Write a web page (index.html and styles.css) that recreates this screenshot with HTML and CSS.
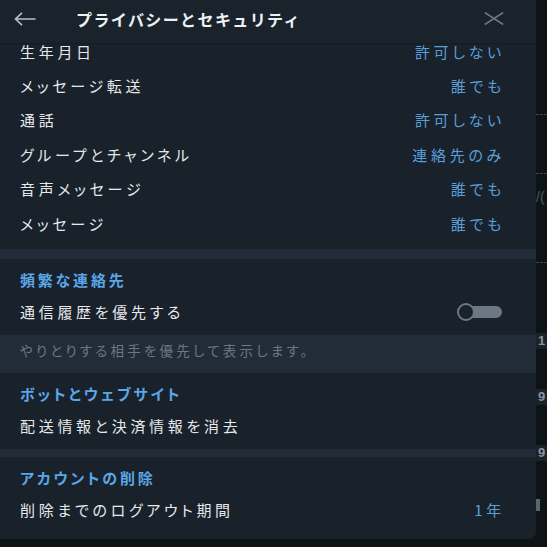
FILE: index.html
```html
<!DOCTYPE html>
<html lang="ja">
  <head>
    <meta charset="UTF-8" />
    <meta name="viewport" content="width=device-width, initial-scale=1.0" />
    <title>プライバシーとセキュリティ</title>
    <link rel="stylesheet" href="styles.css">
  </head>
  <body>
    <div class="screen">
      <section class="panel">
        <header class="panelHeader">
          <button type="button" class="iconButton backButton" aria-label="戻る">
            <svg width="22" height="14" viewBox="0 0 22 14">
              <path d="M21.5 7H1.5M8 0.8L1.5 7L8 13.2" fill="none" stroke="#b9c0c7" stroke-width="1.6" />
            </svg>
          </button>
          <h1 class="panelTitle">プライバシーとセキュリティ</h1>
          <button type="button" class="iconButton closeButton" aria-label="閉じる">
            <svg width="20" height="13" viewBox="0 0 20 13">
              <path d="M0.8 0.6L19.2 12.4M19.2 0.6L0.8 12.4" fill="none" stroke="#6b7681" stroke-width="1.8" />
            </svg>
          </button>
        </header>

        <div class="panelScroll">
          <div class="settingsGroup firstGroup">
            <div class="settingRow scrolledRow"><span class="rowLabel">生年月日</span><span class="rowValue">許可しない</span></div>
            <div class="settingRow"><span class="rowLabel">メッセージ転送</span><span class="rowValue">誰でも</span></div>
            <div class="settingRow"><span class="rowLabel">通話</span><span class="rowValue">許可しない</span></div>
            <div class="settingRow"><span class="rowLabel">グループとチャンネル</span><span class="rowValue">連絡先のみ</span></div>
            <div class="settingRow"><span class="rowLabel">音声メッセージ</span><span class="rowValue">誰でも</span></div>
            <div class="settingRow"><span class="rowLabel">メッセージ</span><span class="rowValue">誰でも</span></div>
          </div>

          <div class="divider wideDivider"></div>

          <div class="settingsGroup">
            <div class="groupTitle">頻繁な連絡先</div>
            <div class="settingRow">
              <span class="rowLabel">通信履歴を優先する</span>
              <span class="toggle"><span class="toggleKnob"></span><span class="toggleTrack"></span></span>
            </div>
          </div>
          <div class="groupNote">やりとりする相手を優先して表示します。</div>

          <div class="settingsGroup">
            <div class="groupTitle">ボットとウェブサイト</div>
            <div class="settingRow"><span class="rowLabel">配送情報と決済情報を消去</span></div>
          </div>

          <div class="divider"></div>

          <div class="settingsGroup lastGroup">
            <div class="groupTitle">アカウントの削除</div>
            <div class="settingRow"><span class="rowLabel">削除までのログアウト期間</span><span class="rowValue">1年</span></div>
          </div>
        </div>
      </section>

      <aside class="backdropStrip">
        <span class="stripDots firstDots"></span>
        <span class="stripDots"></span>
        <span class="stripText slashText">/(</span>
        <span class="stripDots"></span>
        <span class="stripBadge badgeOne">1</span>
        <span class="stripBadge">9</span>
        <span class="stripBadge">9</span>
        <span class="stripBar"></span>
      </aside>
    </div>
  </body>
</html>
```

FILE: styles.css
```css
html {
  box-sizing: border-box;
  font-family: "Noto Sans CJK JP", "Noto Sans", sans-serif;
}

*,
*:before,
*:after {
  box-sizing: inherit;
}

body {
  margin: 0;
  padding: 0;
  background-color: #0e1318;
  color: #e4e8ec;
}

.screen {
  width: 547px;
  height: 547px;
  display: flex;
  flex-direction: row;
  overflow: hidden;
}

.panel {
  width: 536px;
  height: 539px;
  flex-shrink: 0;
  display: flex;
  flex-direction: column;
  background-color: #19212b;
  border-bottom-right-radius: 7px;
  overflow: hidden;
}

/* header */

.panelHeader {
  height: 44px;
  flex-shrink: 0;
  display: flex;
  align-items: center;
  padding: 0 32px 0 14px;
  background-color: #1a222c;
  border-bottom: 1px solid #141b23;
}

.iconButton {
  border: none;
  padding: 0;
  background: none;
  display: flex;
  align-items: center;
}

.iconButton svg {
  display: block;
}

.backButton {
  margin-top: -5px;
}

.panelTitle {
  margin: -6px 0 0 40px;
  font-size: 16px;
  font-weight: 700;
  letter-spacing: 1.4px;
  color: #eef1f4;
  flex: 1;
}

.closeButton {
  margin-top: -6px;
}

/* scroll area */

.panelScroll {
  flex: 1;
}

.settingsGroup {
  padding: 7px 0 3px;
}

.firstGroup {
  padding: 0 0 8px;
}

.lastGroup {
  padding-bottom: 6px;
}

.settingRow {
  height: 34.5px;
  display: flex;
  align-items: center;
  justify-content: space-between;
  padding: 0 31px 0 20px;
  font-size: 15px;
  line-height: 16px;
  letter-spacing: 3.7px;
  font-feature-settings: "palt";
}

/* the list is scrolled: only the lower part of the first row shows */
.scrolledRow {
  height: 24.5px;
  align-items: flex-start;
}

.settingsGroup:not(.firstGroup) .settingRow {
  height: 40px;
}

.rowLabel {
  color: #e6e9ec;
}

.rowValue {
  color: #5b9fd9;
}

.groupTitle {
  height: 26px;
  display: flex;
  align-items: center;
  padding-left: 20px;
  font-size: 15px;
  font-weight: 700;
  letter-spacing: 2.8px;
  font-feature-settings: "palt";
  color: #5aa6e6;
}

.divider {
  height: 8px;
  background-color: #222c38;
}

.wideDivider {
  height: 10px;
}

.groupNote {
  height: 38px;
  padding: 5px 20px 0;
  background-color: #222c38;
  font-size: 13.5px;
  letter-spacing: 3.2px;
  font-feature-settings: "palt";
  color: #6b7783;
}

/* toggle */

.toggle {
  display: flex;
  align-items: center;
  margin-right: 3px;
}

.toggleKnob {
  width: 18px;
  height: 18px;
  border: 2px solid #6c7883;
  border-radius: 50%;
  background-color: #19212b;
  position: relative;
  z-index: 1;
}

.toggleTrack {
  width: 34px;
  height: 12px;
  margin-left: -7px;
  border-radius: 6px;
  background-color: #6c7883;
}

/* background behind the panel */

.backdropStrip {
  flex: 1;
  display: flex;
  flex-direction: column;
  overflow: hidden;
  font-family: "Liberation Sans", sans-serif;
  color: #6e7780;
}

.stripDots {
  height: 2px;
  margin-top: 57px;
  border-top: 1px dashed #3b434c;
}

.firstDots {
  margin-top: 114px;
}

.stripText {
  height: 16px;
  margin-top: 14px;
  font-size: 14px;
  line-height: 16px;
  white-space: nowrap;
}

.slashText {
  color: #505962;
}

.stripBadge {
  height: 16px;
  margin-top: 40px;
  padding-left: 2px;
  font-size: 13px;
  font-weight: 700;
  line-height: 16px;
  color: #8a939c;
  background-color: #1a222b;
}

.badgeOne {
  margin-top: 69px;
}

.stripBar {
  width: 4px;
  height: 12px;
  margin-top: 38px;
  background-color: #5c646c;
}
```
